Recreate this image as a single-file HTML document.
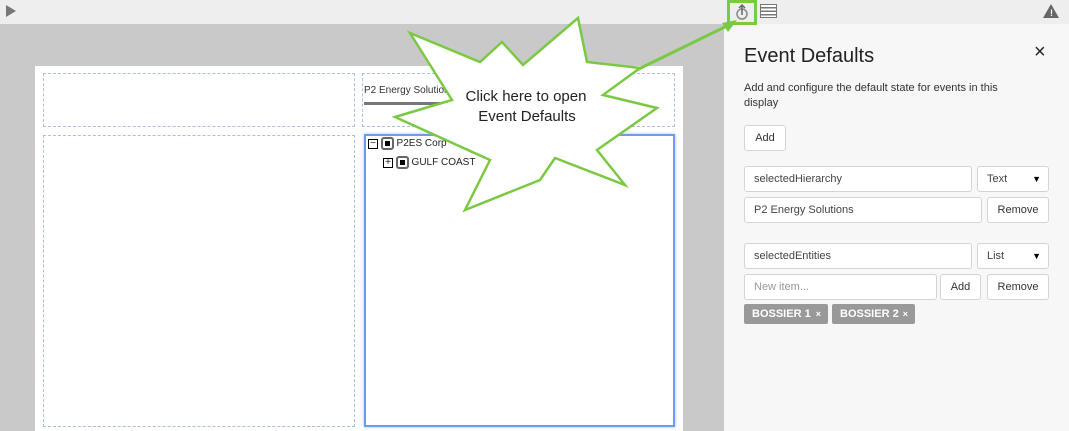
<!DOCTYPE html>
<html><head><style>
*{box-sizing:border-box;margin:0;padding:0}
body{width:1069px;height:431px;overflow:hidden;font-family:"Liberation Sans",sans-serif;position:relative;background:#c9c9c9}
.top{position:absolute;left:0;top:0;width:1069px;height:24px;background:#eeeeee}
.abs{position:absolute}
.page{left:35px;top:66px;width:648px;height:365px;background:#fff}
.dash{border:1px dashed #a9c1e0}
.panel{left:724px;top:24px;width:345px;height:407px;background:#f7f7f7}
.in{position:absolute;background:#fff;border:1px solid #d4d4d4;border-radius:3px;font-size:11px;color:#444;padding-left:9px;line-height:24px;height:26px}
.btn{position:absolute;background:#fff;border:1px solid #d4d4d4;border-radius:3px;font-size:11px;color:#333;text-align:center;line-height:24px;height:26px}
.tag{position:absolute;background:#999;color:#fff;font-size:11px;border-radius:2px;height:20px;line-height:20px;padding-left:8px;font-weight:bold}
.cb{display:inline-block;width:13px;height:13px;border:2px solid #666;border-radius:3px;position:relative;vertical-align:middle}
.cb:after{content:"";position:absolute;left:2px;top:2px;width:5px;height:5px;background:#000}
.pm{display:inline-block;width:10px;height:10px;border:1px solid #000;vertical-align:middle;position:relative;font-size:10px;line-height:8px;text-align:center}
</style></head><body>
<div class="top"></div>
<div class="abs" style="left:6px;top:5px;width:0;height:0;border-left:10px solid #777;border-top:6px solid transparent;border-bottom:6px solid transparent"></div>

<div class="abs page"></div>
<div class="abs dash" style="left:43px;top:73px;width:312px;height:54px"></div>
<div class="abs dash" style="left:362px;top:73px;width:313px;height:54px"></div>
<div class="abs" style="left:364px;top:85px;font-size:10px;color:#333">P2 Energy Solutions</div>
<div class="abs" style="left:364px;top:102px;width:100px;height:3px;background:#777"></div>
<div class="abs dash" style="left:43px;top:135px;width:312px;height:292px"></div>
<div class="abs" style="left:364px;top:134px;width:311px;height:293px;border:2px solid #6b9cf0;box-shadow:0 0 3px #9cbcf5"></div>
<div class="abs" style="left:368px;top:137px;font-size:10px;color:#222"><span class="pm">−</span> <span class="cb"></span> P2ES Corp</div>
<div class="abs" style="left:383px;top:156px;font-size:10px;color:#222"><span class="pm">+</span> <span class="cb"></span> GULF COAST</div>

<div class="abs panel"></div>
<div class="abs" style="left:727px;top:0;width:30px;height:25px;border:3px solid #7ac943"></div>
<svg class="abs" style="left:733px;top:3px" width="18" height="18" viewBox="0 0 18 18"><circle cx="9" cy="11" r="5" fill="none" stroke="#888" stroke-width="1.5"/><path d="M9 2v10M6 5l3-3 3 3" stroke="#666" stroke-width="1.5" fill="none"/></svg>
<div class="abs" style="left:760px;top:4px;width:17px;height:14px;border:1.5px solid #777;background:repeating-linear-gradient(#fff 0 2px,#777 2px 3.5px)"></div>
<div class="abs" style="left:1043px;top:4px;width:0;height:0;border-left:8px solid transparent;border-right:8px solid transparent;border-bottom:14px solid #666"></div>
<div class="abs" style="left:1050px;top:8px;color:#fff;font-size:9px;font-weight:bold">!</div>
<div class="abs" style="left:744px;top:45px;font-size:20px;color:#222">Event Defaults</div>
<div class="abs" style="left:1034px;top:41px;font-size:20px;color:#222">×</div>
<div class="abs" style="left:744px;top:81px;width:280px;font-size:11px;color:#333;line-height:15px">Add and configure the default state for events in this display</div>
<div class="btn" style="left:744px;top:125px;width:42px">Add</div>
<div class="in" style="left:744px;top:166px;width:228px">selectedHierarchy</div>
<div class="in" style="left:977px;top:166px;width:72px">Text<span style="position:absolute;right:7px;font-size:9px;color:#000">▼</span></div>
<div class="in" style="left:744px;top:197px;width:238px">P2 Energy Solutions</div>
<div class="btn" style="left:987px;top:197px;width:62px">Remove</div>
<div class="in" style="left:744px;top:243px;width:228px">selectedEntities</div>
<div class="in" style="left:977px;top:243px;width:72px">List<span style="position:absolute;right:7px;font-size:9px;color:#000">▼</span></div>
<div class="in" style="left:744px;top:274px;width:193px;color:#999">New item...</div>
<div class="btn" style="left:940px;top:274px;width:41px">Add</div>
<div class="btn" style="left:987px;top:274px;width:62px">Remove</div>
<div class="tag" style="left:744px;top:304px;width:84px">BOSSIER 1<span style="position:absolute;right:7px;font-size:9px">×</span></div>
<div class="tag" style="left:832px;top:304px;width:83px">BOSSIER 2<span style="position:absolute;right:7px;font-size:9px">×</span></div>

<svg class="abs" style="left:0;top:0" width="760" height="431">
<line x1="612" y1="82" x2="733" y2="23" stroke="#7ac943" stroke-width="3"/>
<polygon points="737,20 722,23 728,32" fill="#7ac943"/>
<polygon points="578,18 587,62 640,68 603,95 657,108 597,150 625,185 555,158 540,180 465,210 490,160 395,117 452,100 410,33 480,62 502,42 523,65" fill="#fff" stroke="#7ac943" stroke-width="2.5"/>
<text x="526" y="101" font-family="Liberation Sans" font-size="15" text-anchor="middle" fill="#222">Click here to open</text>
<text x="527" y="121" font-family="Liberation Sans" font-size="15" text-anchor="middle" fill="#222">Event Defaults</text>
</svg>
</body></html>
